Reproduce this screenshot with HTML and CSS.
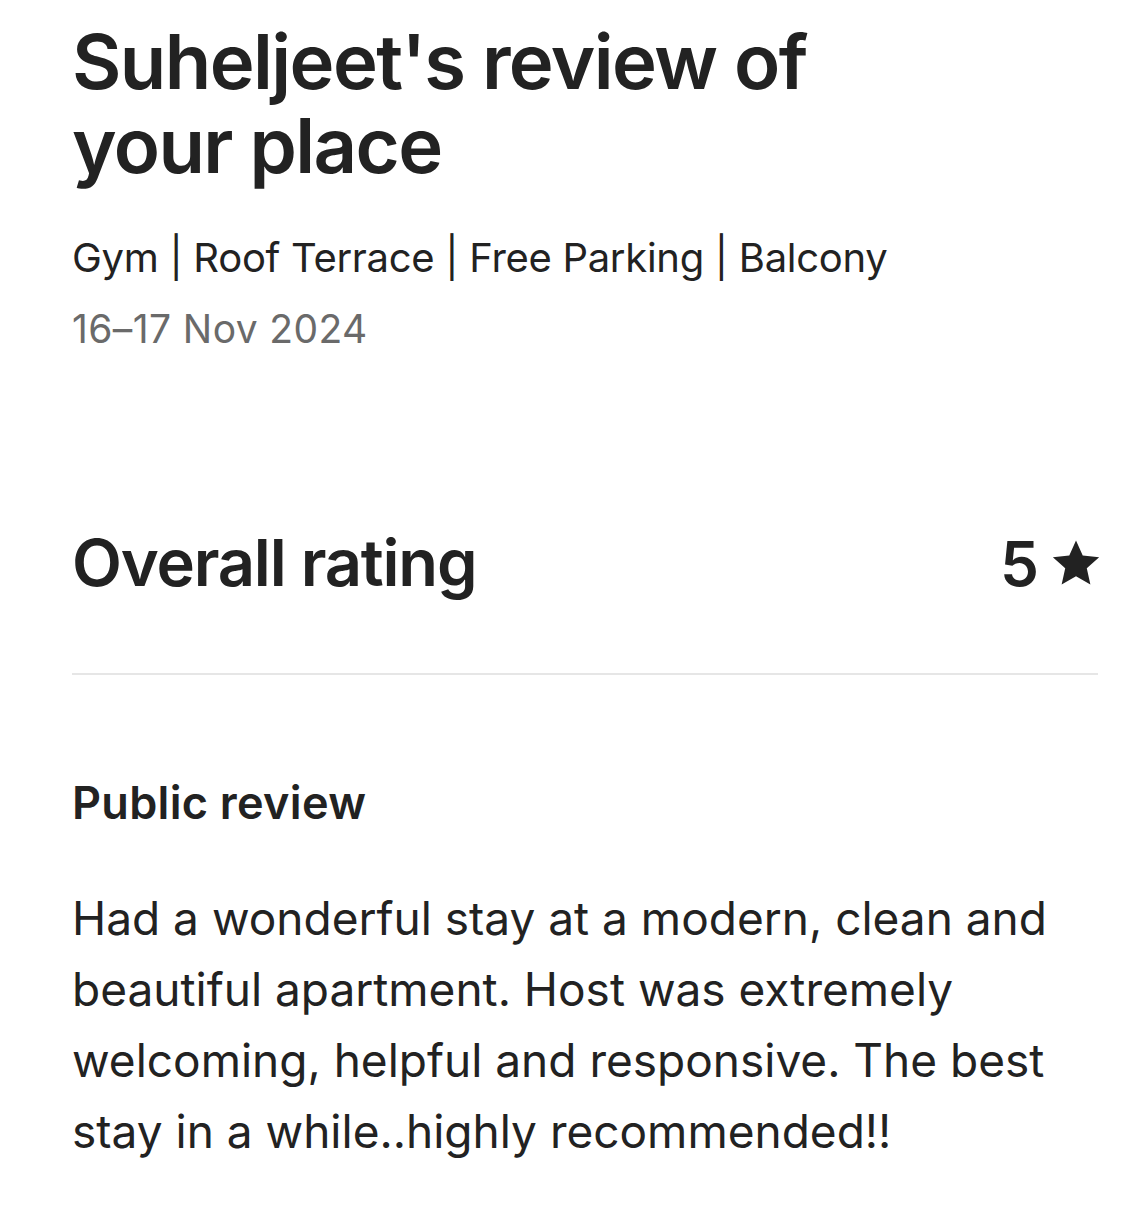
FILE: index.html
```html
<!DOCTYPE html>
<html lang="en">

<head>
    <meta charset="UTF-8">
    <meta name="viewport" content="width=device-width, initial-scale=1.0">
    <title>Review of your place</title>
    <link rel="stylesheet" href="styles.css">
</head>

<body>
    <div class="page">
        <div class="header">
            <h1>Suheljeet's review of your place</h1>
            <p class="listing">Gym | Roof Terrace | Free Parking | Balcony</p>
            <p class="dates">16–17 Nov 2024</p>
        </div>

        <div class="rating-row">
            <h2>Overall rating</h2>
            <div class="score">
                <span>5</span>
                <svg class="star" viewBox="0 0 32 32" aria-hidden="true">
                    <path d="M16 1.6l4.3 9.6 10.5 1.1-7.9 7.1 2.3 10.3L16 24.4l-9.2 5.3 2.3-10.3-7.9-7.1 10.5-1.1z" />
                </svg>
            </div>
        </div>

        <hr class="divider">

        <div class="review">
            <h3>Public review</h3>
            <p>Had a wonderful stay at a modern, clean and beautiful apartment. Host was extremely welcoming, helpful and responsive. The best stay in a while..highly recommended!!</p>
        </div>
    </div>
</body>

</html>
```

FILE: styles.css
```css
:root {
    --text-color: #222222;
    --muted-color: #6a6a6a;
    --divider-color: #e6e6e6;
}

* {
    margin: 0;
    padding: 0;
    box-sizing: border-box;
}

body {
    font-family: Inter, 'Noto Sans', sans-serif;
    background: #ffffff;
    color: var(--text-color);
}

.page {
    padding: 19px 41px 40px 72px;
}

.header h1 {
    font-size: 76px;
    line-height: 84px;
    font-weight: 600;
    letter-spacing: -1.6px;
    max-width: 780px;
}

.listing {
    margin-top: 45px;
    font-size: 40px;
    line-height: 52px;
    letter-spacing: -0.3px;
}

.dates {
    margin-top: 19px;
    font-size: 39px;
    line-height: 52px;
    letter-spacing: 0.4px;
    color: var(--muted-color);
}

.rating-row {
    display: flex;
    justify-content: space-between;
    align-items: center;
    margin-top: 168px;
}

.rating-row h2 {
    font-size: 65px;
    line-height: 80px;
    font-weight: 600;
    letter-spacing: -1.2px;
}

.score {
    display: flex;
    align-items: center;
    gap: 12px;
    font-size: 62px;
    font-weight: 600;
}

.star {
    width: 50px;
    height: 50px;
    margin-right: -3px;
    fill: var(--text-color);
}

.divider {
    border: none;
    border-top: 2px solid var(--divider-color);
    margin-top: 70px;
}

.review h3 {
    margin-top: 100px;
    font-size: 45px;
    line-height: 56px;
    font-weight: 600;
    letter-spacing: 0.3px;
}

.review p {
    margin-top: 52px;
    font-size: 46px;
    line-height: 71px;
}
```
